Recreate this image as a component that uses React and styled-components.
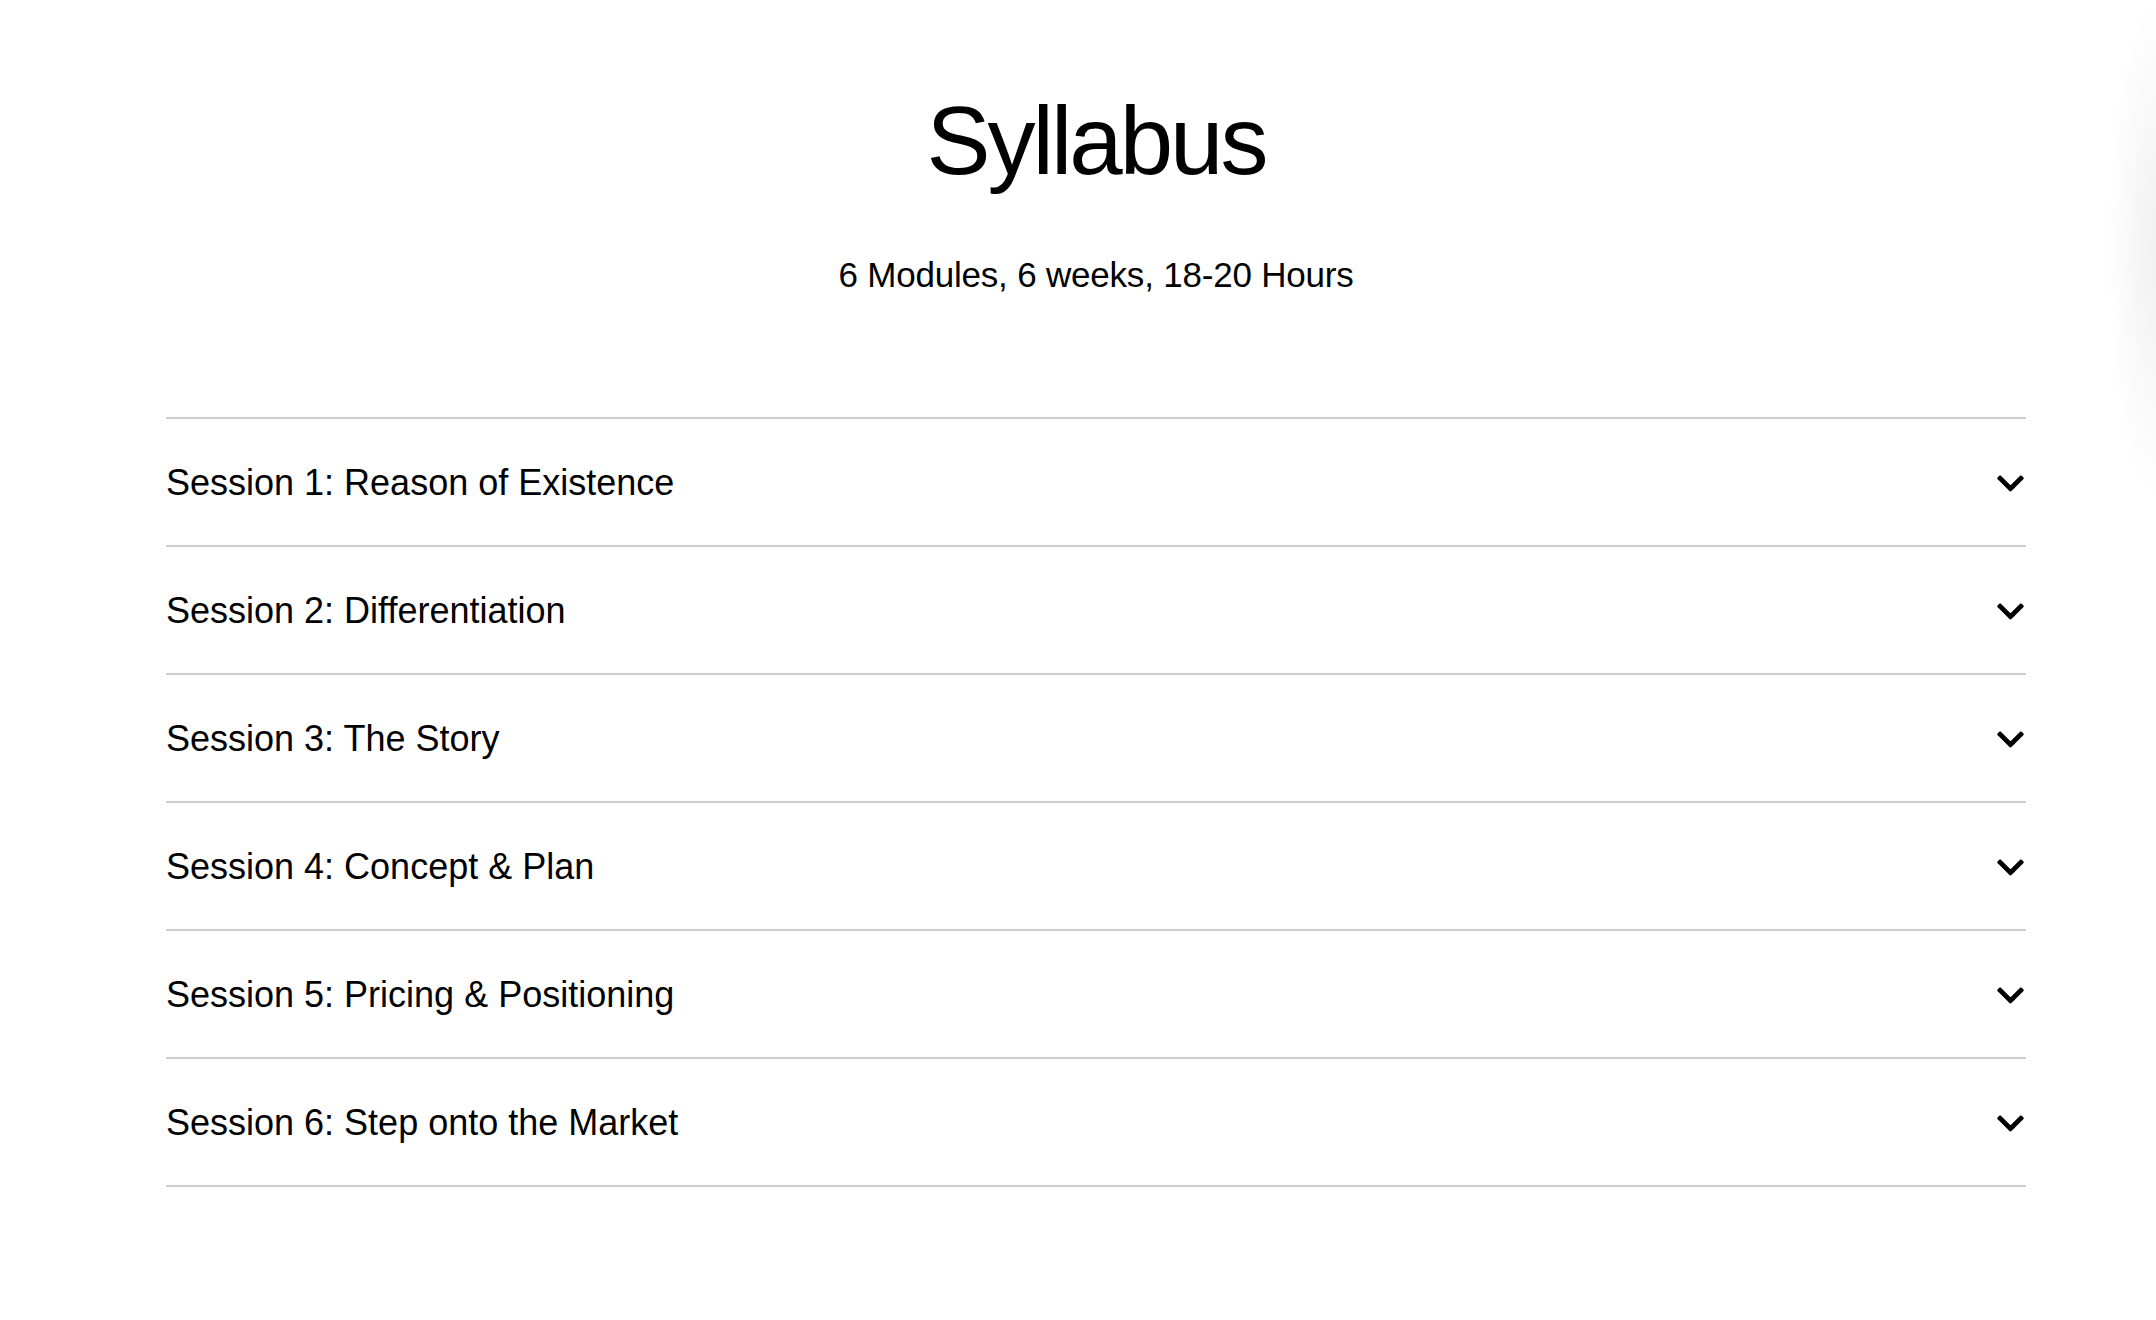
import React from "react";
import styled, { createGlobalStyle } from "styled-components";
import { FaChevronDown } from "react-icons/fa";

const sessions = [
  "Session 1: Reason of Existence",
  "Session 2: Differentiation",
  "Session 3: The Story",
  "Session 4: Concept & Plan",
  "Session 5: Pricing & Positioning",
  "Session 6: Step onto the Market",
];

export default function App() {
  return (
    <>
      <GlobalStyle />
      <Wrapper id="syllabus">
        <HeaderInfo>
          <Title>Syllabus</Title>
          <Subtitle>6 Modules, 6 weeks, 18-20 Hours</Subtitle>
        </HeaderInfo>
        <List>
          {sessions.map((name) => (
            <Row key={name}>
              <RowTitle>{name}</RowTitle>
              <Chevron>
                <FaChevronDown size={31} />
              </Chevron>
            </Row>
          ))}
        </List>
      </Wrapper>
      <EdgeShade />
    </>
  );
}

const GlobalStyle = createGlobalStyle`
  body {
    margin: 0;
    background: #ffffff;
    color: #000000;
    font-family: "Liberation Sans", Arial, Helvetica, sans-serif;
  }
`;

const Wrapper = styled.section`
  width: 100%;
  box-sizing: border-box;
  padding: 88px 130px 120px 166px;
`;

const HeaderInfo = styled.div`
  text-align: center;
  margin-bottom: 121px;
`;

const Title = styled.h1`
  margin: 0;
  font-size: 96px;
  line-height: 1.1;
  font-weight: 400;
  letter-spacing: -3px;
`;

const Subtitle = styled.p`
  margin: 60px 0 0;
  font-size: 35px;
  line-height: 1.2;
  letter-spacing: -0.2px;
`;

const List = styled.div`
  border-top: 2px solid #cfcfcf;
`;

const Row = styled.div`
  height: 126px;
  display: flex;
  align-items: center;
  justify-content: space-between;
  border-bottom: 2px solid #cfcfcf;
  cursor: pointer;
`;

const RowTitle = styled.span`
  font-size: 36px;
  letter-spacing: 0;
  padding-top: 2px;
`;

const Chevron = styled.span`
  display: flex;
  align-items: center;
  padding-top: 4px;
  color: #000;
`;

const EdgeShade = styled.div`
  position: fixed;
  top: 0;
  right: 0;
  width: 48px;
  height: 500px;
  pointer-events: none;
  background: radial-gradient(ellipse 100% 50% at 100% 50%, rgba(0, 0, 0, 0.06), rgba(0, 0, 0, 0) 100%);
`;
